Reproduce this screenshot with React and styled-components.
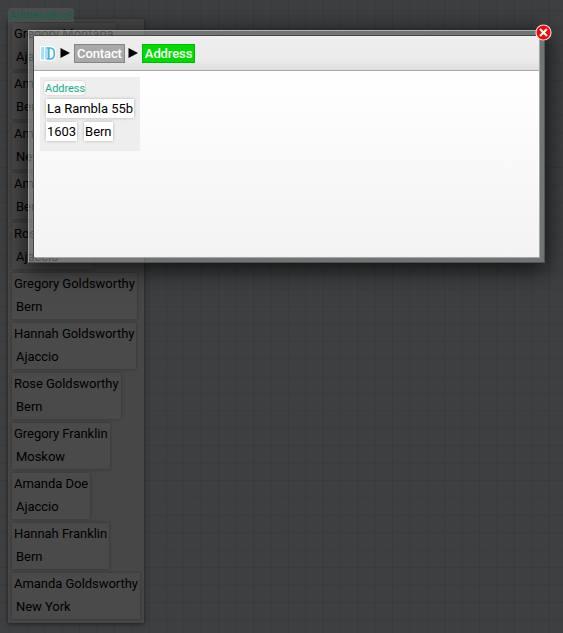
import React from "react";
import styled, { createGlobalStyle } from "styled-components";

const Global = createGlobalStyle`
  * { box-sizing: border-box; }
  body { margin: 0; overflow: hidden; background: #3d3e40; font-family: Roboto, sans-serif; font-size: 13px; }
`;

const Canvas = styled.main`
  position: relative;
  width: 563px;
  height: 633px;
  overflow: hidden;
  padding: 8px;
  background-color: #3e3f41;
  background-image:
    linear-gradient(90deg, rgba(47, 56, 68, 0.6) 1px, transparent 1px),
    linear-gradient(rgba(47, 56, 68, 0.5) 1px, transparent 1px);
  background-size: 17.4px 17.4px;
  background-position: 9.5px 10.5px;
`;

const BookLabel = styled.div`
  position: relative;
  z-index: 1;
  width: 66px;
  height: 14px;
  margin-bottom: -3px;
  padding-left: 1px;
  border-radius: 3px 3px 0 0;
  background: #4c4d4d;
  color: #08644d;
  font-size: 11px;
  letter-spacing: -0.05px;
  line-height: 15px;
  white-space: nowrap;
`;

const Book = styled.section`
  display: flex;
  flex-direction: column;
  align-items: flex-start;
  gap: 4px;
  width: 136px;
  height: 604px;
  padding: 4px;
  background: #474747;
  box-shadow: 0 1px 4px rgba(0, 0, 0, 0.55);
`;

const Person = styled.article`
  flex: none;
  height: 46px;
  padding: 0 2px;
  background: #4a4a4a;
  box-shadow: 0 0 3px rgba(0, 0, 0, 0.32);
  color: #000;
  letter-spacing: -0.04px;
  white-space: nowrap;
`;

const Name = styled.div`
  height: 23px;
  line-height: 22px;
`;

const City = styled.div`
  height: 23px;
  padding-left: 2px;
  line-height: 22px;
`;

const Dialog = styled.section`
  position: absolute;
  left: 28px;
  top: 30px;
  width: 517px;
  height: 233px;
  padding: 5px;
  border: 1px solid;
  border-color: #adadad #525554 #525554 #a0a0a0;
  background: rgba(160, 164, 162, 0.52);
  box-shadow: 0 5px 22px 2px rgba(0, 0, 0, 0.72);
`;

const DialogBody = styled.div`
  height: 221px;
  background: linear-gradient(#fff 15%, #f3f3f3);
  box-shadow: 0 -1px 0 #454545, -1px 0 0 #454545, 1px 1px 0 #a4a7a6;
`;

const Breadcrumb = styled.nav`
  display: flex;
  align-items: center;
  height: 35px;
  padding-left: 6px;
  background: linear-gradient(#eee, #ebebeb 68%, #dedede);
  border-bottom: 1px solid #aaa;
`;

const Crumb = styled.span`
  height: 19px;
  padding: 0 2px;
  border: 1px solid ${({ $active }) => ($active ? "#00b900" : "#858585")};
  background: ${({ $active }) => ($active ? "#00dc00" : "#a9a9a9")};
  color: #fff;
  font-weight: 500;
  letter-spacing: -0.1px;
  line-height: 18px;
`;

const Arrow = styled.svg`
  width: 10px;
  height: 10px;
  margin: 0 4px 0 3px;
`;

const AddressGroup = styled.section`
  width: 100px;
  height: 74px;
  margin: 6px 0 0 6px;
  padding: 4px;
  background: #eee;
`;

const AddressLabel = styled.div`
  width: 41px;
  height: 14px;
  padding-left: 1px;
  border-radius: 3px;
  background: #fafafa;
  box-shadow: 0 0 2px rgba(0, 0, 0, 0.2);
  color: #16ad8a;
  font-size: 11px;
  letter-spacing: -0.05px;
  line-height: 15px;
  white-space: nowrap;
`;

const FieldRow = styled.div`
  display: flex;
  gap: 7px;
  height: 19px;
  margin: 4px 0 0 2px;
`;

const Field = styled.div`
  height: 19px;
  padding: 0 1px;
  background: #fff;
  box-shadow: 0 0 3px rgba(0, 0, 0, 0.25);
  color: #000;
  letter-spacing: -0.04px;
  line-height: 19px;
  white-space: nowrap;
`;

const Close = styled.button`
  position: absolute;
  right: -7.5px;
  top: -7.5px;
  width: 17px;
  height: 17px;
  padding: 0;
  border: 0;
  background: none;
  svg { display: block; }
`;

const people = [
  ["Gregory Montana", "Ajaccio"], ["Amanda Franklin", "Bern"],
  ["Amanda Montana", "New York"], ["Amanda Smith", "Bern"],
  ["Rose Franklin", "Ajaccio"], ["Gregory Goldsworthy", "Bern"],
  ["Hannah Goldsworthy", "Ajaccio"], ["Rose Goldsworthy", "Bern"],
  ["Gregory Franklin", "Moskow"], ["Amanda Doe", "Ajaccio"],
  ["Hannah Franklin", "Bern"], ["Amanda Goldsworthy", "New York"],
];

const BreadcrumbArrow = () => (
  <Arrow viewBox="0 0 10 10"><path d="M.5 0 10 5 .5 10Z" /></Arrow>
);

const Logo = () => (
  <svg width="17" height="15" viewBox="0 0 17 15">
    <path d="M0 0h11.5Q16 1 16 7.5T11.5 15H0Z" fill="#fff" />
    <path d="M1 1h3v12.5H1zM5 1h3v12.5H5z" fill="#a6e1fc" />
    <path d="M7 2h3.2q4.2 0 4.2 5.5T10.2 13H7M8.8 2v11" fill="none" stroke="#42b3dc" strokeWidth="1.6" />
  </svg>
);

export default function App() {
  return (
    <>
      <Global />
      <Canvas>
        <BookLabel>AddressBook</BookLabel>
        <Book>
          {people.map(([name, city]) => (
            <Person key={name}><Name>{name}</Name><City>{city}</City></Person>
          ))}
        </Book>
        <Dialog>
          <DialogBody>
            <Breadcrumb>
              <Logo />
              <BreadcrumbArrow />
              <Crumb>Contact</Crumb>
              <BreadcrumbArrow />
              <Crumb $active>Address</Crumb>
            </Breadcrumb>
            <AddressGroup>
              <AddressLabel>Address</AddressLabel>
              <FieldRow><Field>La Rambla 55b</Field></FieldRow>
              <FieldRow><Field>1603</Field><Field>Bern</Field></FieldRow>
            </AddressGroup>
          </DialogBody>
          <Close aria-label="Close">
            <svg width="17" height="17" viewBox="0 0 17 17">
              <circle cx="8.5" cy="8.5" r="7.5" fill="#f00" stroke="#ddd" strokeWidth="1.2" />
              <path d="m5 5 7 7m0-7-7 7" stroke="#fff" strokeWidth="2.3" />
            </svg>
          </Close>
        </Dialog>
      </Canvas>
    </>
  );
}
